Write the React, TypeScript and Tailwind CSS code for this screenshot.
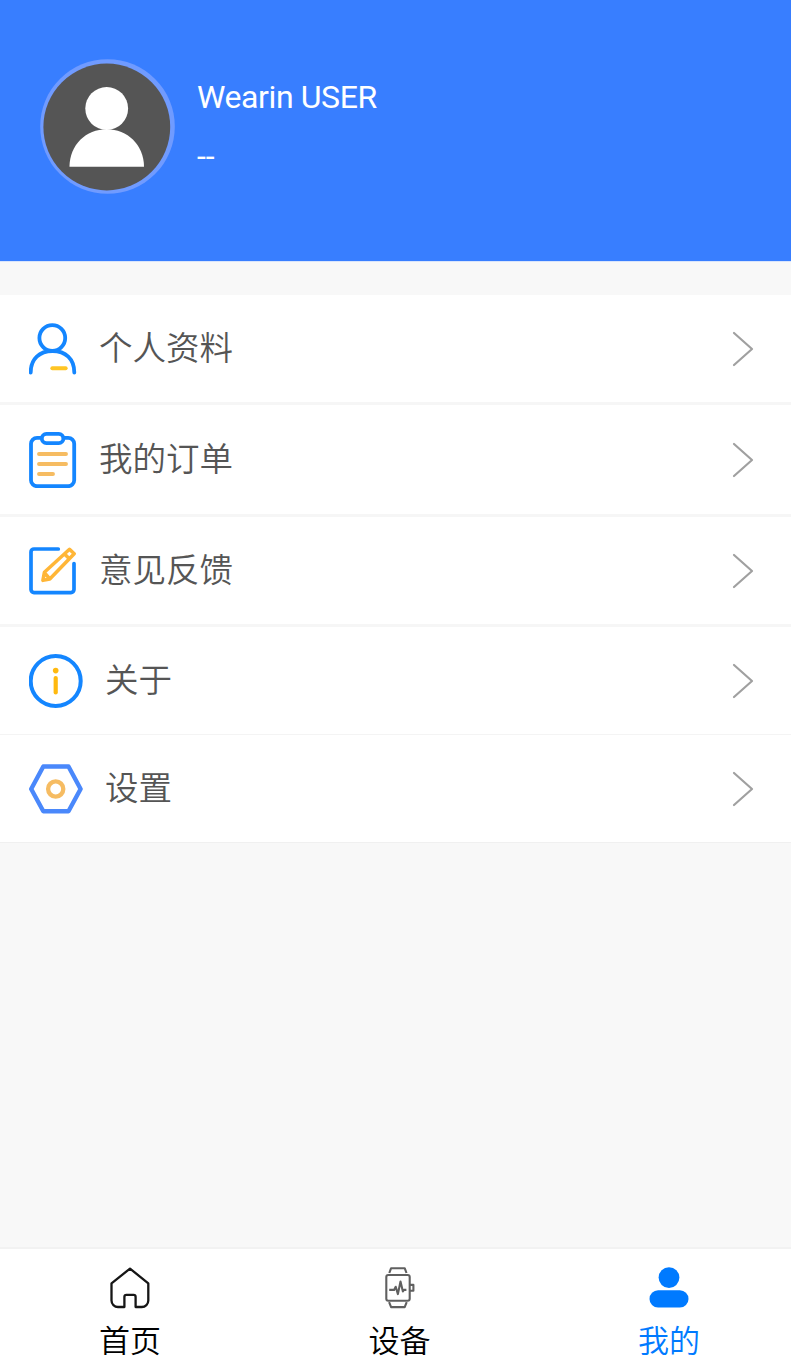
import type { ReactNode } from "react";

interface MenuItem {
  label: string;
  icon: ReactNode;
  className: string;
}

interface TabItem {
  label: string;
  icon: ReactNode;
  active?: boolean;
}

function ProfileIcon() {
  return (
    <svg width="48" height="52" viewBox="0 0 48 52" fill="none" strokeLinecap="round">
      <circle cx="23.3" cy="15" r="12.9" stroke="#1486ff" strokeWidth="3.8" />
      <path d="M1.7 49.5C1.7 36 10.5 28 23.5 28S45.3 36 45.3 49.5" stroke="#1486ff" strokeWidth="3.8" />
      <path d="M23.3 45.2h13.4" stroke="#ffc524" strokeWidth="3.9" />
    </svg>
  );
}

function OrderIcon() {
  return (
    <svg width="48" height="56" viewBox="0 0 48 56" fill="none" strokeLinecap="round">
      <path
        d="M12.5 5.8H8a6 6 0 0 0-6 6v36.4a6 6 0 0 0 6 6h31.2a6 6 0 0 0 6-6V11.8a6 6 0 0 0-6-6h-4.7"
        stroke="#1486ff"
        strokeWidth="3.8"
      />
      <rect x="12.8" y="1.9" width="21.6" height="9.2" rx="4.6" stroke="#1486ff" strokeWidth="3.8" />
      <path d="M10 22h27M10 32h27M10 42h14" stroke="#f6bc62" strokeWidth="3.9" />
    </svg>
  );
}

function FeedbackIcon() {
  return (
    <svg width="48" height="48" viewBox="0 0 48 48" fill="none" strokeLinejoin="round">
      <path
        d="M29.3 2H5a3 3 0 0 0-3 3v37.6a3 3 0 0 0 3 3h37a3 3 0 0 0 3-3V16.5"
        stroke="#1486ff"
        strokeWidth="3.7"
        strokeLinecap="round"
      />
      <path
        d="M40.5 2.3 45.2 6.8 20.8 32 13.9 33.4 15.4 25.3ZM15.4 25.6l5.4 6.4M35.6 7l4.9 4.9"
        stroke="#ffb637"
        strokeWidth="3.5"
      />
    </svg>
  );
}

function AboutIcon() {
  return (
    <svg width="54" height="54" viewBox="0 0 54 54" fill="none">
      <circle cx="26.7" cy="27" r="25" stroke="#1486ff" strokeWidth="4" />
      <circle cx="26.7" cy="16.6" r="2.8" fill="#ffb90f" />
      <path d="M26.7 24v14.4" stroke="#ffb90f" strokeWidth="4.2" strokeLinecap="round" />
    </svg>
  );
}

function SettingsIcon() {
  return (
    <svg width="54" height="50" viewBox="0 0 54 50" fill="none">
      <path
        d="M14.3 2.5h25.2L51.6 25 39.5 47.3H14.3L2.2 25Z"
        stroke="#4a88fb"
        strokeWidth="4.4"
        strokeLinejoin="round"
      />
      <circle cx="26.7" cy="25" r="7.6" stroke="#f6bc62" strokeWidth="4.3" />
    </svg>
  );
}

function ChevronIcon() {
  return (
    <svg className="mt-px" width="22" height="36" viewBox="0 0 22 36" fill="none">
      <path d="m2 2 18 16L2 34" stroke="#a0a0a0" strokeWidth="2.2" strokeLinecap="round" strokeLinejoin="round" />
    </svg>
  );
}

function HomeIcon() {
  return (
    <svg width="42" height="42" viewBox="0 0 42 42" fill="none" stroke="#161616" strokeWidth="2.3" strokeLinejoin="round">
      <path d="M21 1.6 39.3 16.4V33.5a6.5 6.5 0 0 1-6.5 6.5H26.6V29.8a2 2 0 0 0-2-2h-7.2a2 2 0 0 0-2 2V40H9a6.5 6.5 0 0 1-6.5-6.5V16.4Z" />
    </svg>
  );
}

function WatchIcon() {
  return (
    <svg width="42" height="42" viewBox="0 0 42 42" fill="none" stroke="#606060" strokeWidth="2.1" strokeLinejoin="round">
      <rect x="7.3" y="8" width="23.4" height="25.7" rx="2" />
      <path d="m10.3 6 1.8-4.8h13.6L27.5 6M10.1 35.2l2 4.9h13.6l2-4.9M31 17.9h3.4v5.8H31" />
      <path d="M10.2 22.9h4.9l1.6-3.1 2.2 7.3 2.6-12.6 2.4 10 1-1.6h2.5" />
    </svg>
  );
}

function MineIcon() {
  return (
    <svg width="42" height="42" viewBox="0 0 42 42" fill="#007aff">
      <circle cx="21" cy="10.6" r="10.4" />
      <rect x="1.5" y="23.3" width="39" height="17.2" rx="8.6" />
    </svg>
  );
}

const menuItems: MenuItem[] = [
  { label: "个人资料", icon: <ProfileIcon />, className: "h-[110px] border-b-3 border-[#f6f6f6]" },
  { label: "我的订单", icon: <OrderIcon />, className: "h-[112px] border-b-3 border-[#f6f6f6]" },
  { label: "意见反馈", icon: <FeedbackIcon />, className: "h-[110px] border-b-3 border-[#f6f6f6]" },
  { label: "关于", icon: <AboutIcon />, className: "h-[108px] border-b border-[#f4f4f4]" },
  { label: "设置", icon: <SettingsIcon />, className: "h-[108px] border-b border-[#f0f0f0]" },
];

const tabs: TabItem[] = [
  { label: "首页", icon: <HomeIcon /> },
  { label: "设备", icon: <WatchIcon /> },
  { label: "我的", icon: <MineIcon />, active: true },
];

function ProfileHeader() {
  return (
    <header className="flex h-[262px] shrink-0 items-start border-b border-[#d9e5fc] bg-[#387eff] pt-[59px] pl-10 text-white">
      <svg width="135" height="135" viewBox="0 0 135 135">
        <circle cx="67.5" cy="67.5" r="67.3" fill="#709bff" />
        <circle cx="66.8" cy="68" r="63.4" fill="#555" />
        <circle cx="66.7" cy="49.5" r="21.4" fill="#fff" />
        <path d="M29.5 107.8C29.5 86 46 70.3 66.7 70.3S104 86 104 107.8Z" fill="#fff" />
      </svg>
      <div className="ml-[22px] pt-[14px] font-[Roboto,sans-serif] text-[32px] leading-[48px]">
        <h1 className="tracking-[-0.4px]">Wearin USER</h1>
        <p className="mt-[11px]">--</p>
      </div>
    </header>
  );
}

function MenuRow({ label, icon, className }: MenuItem) {
  return (
    <li className={`flex items-center bg-white pr-[37px] pl-[29px] ${className}`}>
      {icon}
      <span className="ml-[22px] flex-1 pb-[5px] text-[33.5px] leading-[48px] font-[350] text-[#555]">{label}</span>
      <ChevronIcon />
    </li>
  );
}

function TabBar() {
  return (
    <nav className="flex h-[116px] shrink-0 justify-between border-t-2 border-[#f2f2f2] bg-white pr-[77px] pl-[85px]">
      {tabs.map((tab) => (
        <a
          key={tab.label}
          className={`flex w-[90px] flex-col items-center pt-[18px] ${tab.active ? "text-[#007aff]" : "text-black"}`}
        >
          {tab.icon}
          <span className="mt-[7px] text-[31px] leading-[46px] font-[350]">{tab.label}</span>
        </a>
      ))}
    </nav>
  );
}

export default function App() {
  return (
    <div className="flex h-[1363px] w-[791px] flex-col overflow-hidden bg-[#f8f8f8] font-['Noto_Sans_CJK_SC',sans-serif]">
      <ProfileHeader />
      <ul className="mt-[33px] flex-1">
        {menuItems.map((item) => (
          <MenuRow key={item.label} {...item} />
        ))}
      </ul>
      <TabBar />
    </div>
  );
}
